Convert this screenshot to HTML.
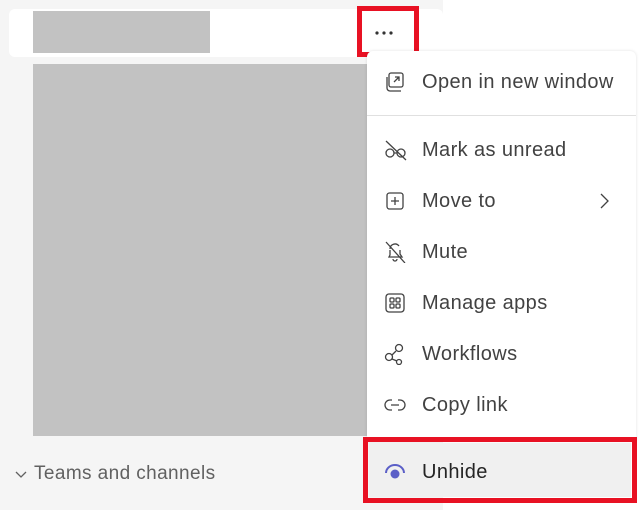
<!DOCTYPE html>
<html><head><style>
*{margin:0;padding:0;box-sizing:border-box}
body{width:642px;height:510px;background:#fff;position:relative;overflow:hidden;font-family:"Liberation Sans",sans-serif;color:#424242}
.left{position:absolute;left:0;top:0;width:443px;height:510px;background:#f5f5f5}
.card{position:absolute;left:9px;top:9px;width:434px;height:48px;background:#fff;border-radius:6px}
.g{position:absolute;background:#c2c2c2}
.red{position:absolute;border:5px solid #e81123}
.menu{position:absolute;left:367px;top:51px;width:269px;height:390px;background:#fff;border-radius:6px 6px 0 0;box-shadow:0 0 3px rgba(0,0,0,.12)}
.it{position:absolute;left:422px;font-size:20px;letter-spacing:0.4px;line-height:22px;color:#424242;white-space:nowrap}
.ic{position:absolute;left:384px}
svg{fill:none;stroke:#424242;stroke-width:1.3}
</style></head><body>
<div class="left"></div>
<div class="card"></div>
<div class="g" style="left:33px;top:11px;width:177px;height:42px"></div>
<div class="g" style="left:33px;top:64px;width:334px;height:372px"></div>
<div class="red" style="left:357px;top:6px;width:62px;height:51px"></div>
<svg style="position:absolute;left:374px;top:30px" width="20" height="6" viewBox="0 0 20 6"><circle cx="3" cy="3" r="1.6" fill="#333" stroke="none"/><circle cx="10" cy="3" r="1.6" fill="#333" stroke="none"/><circle cx="17" cy="3" r="1.6" fill="#333" stroke="none"/></svg>
<div class="menu"></div>
<div style="position:absolute;left:367px;top:115px;width:269px;height:1px;background:#e0e0e0"></div>

<svg class="ic" style="top:71px" width="22" height="22" viewBox="0 0 22 22"><rect x="5" y="2" width="14" height="14" rx="2"/><path d="M3 6v11a3 3 0 0 0 3 3h11"/><path d="M10 11l5-5M11 6h4v4"/></svg>
<div class="it" style="top:71px">Open in new window</div>

<svg class="ic" style="top:139px" width="24" height="22" viewBox="0 0 24 22"><circle cx="6" cy="14" r="4"/><circle cx="17" cy="14" r="4"/><path d="M10 14h3M2 2l20 19"/></svg>
<div class="it" style="top:139px">Mark as unread</div>

<svg class="ic" style="top:190px" width="22" height="22" viewBox="0 0 22 22"><rect x="3" y="3" width="16" height="16" rx="2.5"/><path d="M11 7v8M7 11h8"/></svg>
<div class="it" style="top:190px">Move to</div>
<svg style="position:absolute;left:597px;top:191px" width="14" height="20" viewBox="0 0 14 20"><path d="M4 3l7 7-7 7"/></svg>

<svg class="ic" style="top:241px" width="22" height="22" viewBox="0 0 22 22"><path d="M6 8a5 5 0 0 1 9-3M16 9v4l2 3H5l1-2V9M9 18a2 2 0 0 0 4 0M2 1l19 21"/></svg>
<div class="it" style="top:241px">Mute</div>

<svg class="ic" style="top:292px" width="22" height="22" viewBox="0 0 22 22"><rect x="2" y="2" width="18" height="18" rx="3"/><rect x="6" y="6" width="4" height="4" rx="1"/><rect x="12" y="6" width="4" height="4" rx="1"/><rect x="6" y="12" width="4" height="4" rx="1"/><rect x="12" y="12" width="4" height="4" rx="1"/></svg>
<div class="it" style="top:292px">Manage apps</div>

<svg class="ic" style="top:343px" width="22" height="22" viewBox="0 0 22 22"><circle cx="5" cy="14" r="3.5"/><circle cx="15" cy="5" r="3.5"/><circle cx="15" cy="19" r="2.5"/><path d="M8 12l4-4M8 16l5 2"/></svg>
<div class="it" style="top:343px">Workflows</div>

<svg class="ic" style="top:394px" width="22" height="22" viewBox="0 0 22 22"><path d="M8 6H6a5 5 0 0 0 0 10h2M14 6h2a5 5 0 0 1 0 10h-2M7 11h8"/></svg>
<div class="it" style="top:394px">Copy link</div>

<div class="red" style="left:363px;top:437px;width:274px;height:66px"></div>
<div style="position:absolute;left:369px;top:443px;width:262px;height:54px;background:#f0f0f0"></div>
<svg class="ic" style="top:461px" width="22" height="22" viewBox="0 0 22 22"><path d="M2 12a9 8 0 0 1 18 0" stroke="#5b5fc7" stroke-width="2"/><circle cx="11" cy="13" r="4.5" fill="#5b5fc7" stroke="none"/></svg>
<div class="it" style="top:461px;color:#242424">Unhide</div>

<svg style="position:absolute;left:14px;top:468px" width="14" height="12" viewBox="0 0 14 12"><path d="M2 4l5 5 5-5" stroke="#616161"/></svg>
<div style="position:absolute;left:34px;top:463px;font-size:19px;letter-spacing:0.4px;color:#616161">Teams and channels</div>
</body></html>
